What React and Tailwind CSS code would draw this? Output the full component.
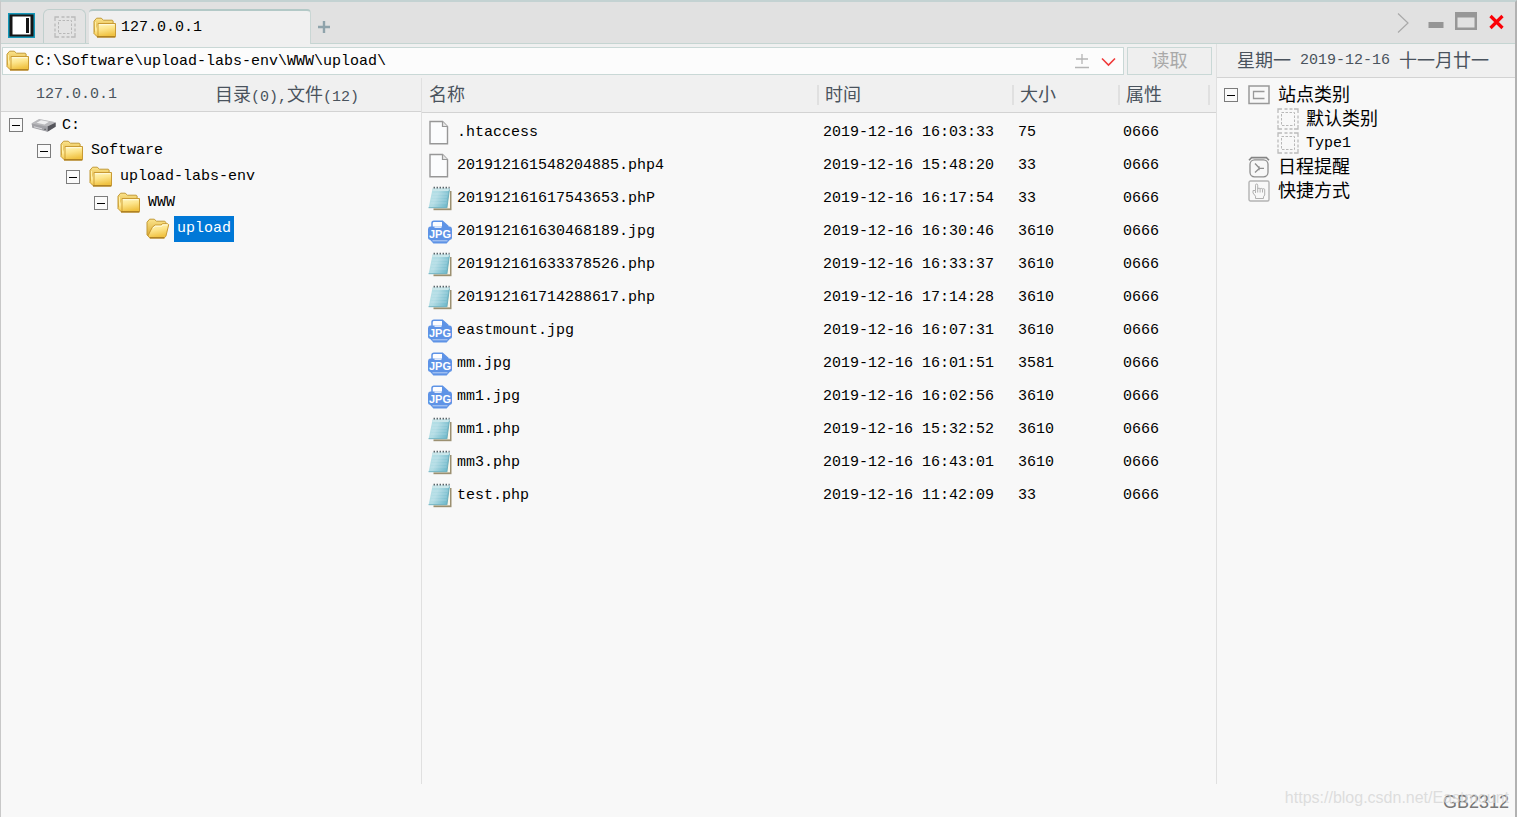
import React from "react";

const files = [
  { name: ".htaccess", kind: "file", time: "2019-12-16 16:03:33", size: "75", attr: "0666" },
  { name: "201912161548204885.php4", kind: "file", time: "2019-12-16 15:48:20", size: "33", attr: "0666" },
  { name: "201912161617543653.phP", kind: "note", time: "2019-12-16 16:17:54", size: "33", attr: "0666" },
  { name: "201912161630468189.jpg", kind: "jpg", time: "2019-12-16 16:30:46", size: "3610", attr: "0666" },
  { name: "201912161633378526.php", kind: "note", time: "2019-12-16 16:33:37", size: "3610", attr: "0666" },
  { name: "201912161714288617.php", kind: "note", time: "2019-12-16 17:14:28", size: "3610", attr: "0666" },
  { name: "eastmount.jpg", kind: "jpg", time: "2019-12-16 16:07:31", size: "3610", attr: "0666" },
  { name: "mm.jpg", kind: "jpg", time: "2019-12-16 16:01:51", size: "3581", attr: "0666" },
  { name: "mm1.jpg", kind: "jpg", time: "2019-12-16 16:02:56", size: "3610", attr: "0666" },
  { name: "mm1.php", kind: "note", time: "2019-12-16 15:32:52", size: "3610", attr: "0666" },
  { name: "mm3.php", kind: "note", time: "2019-12-16 16:43:01", size: "3610", attr: "0666" },
  { name: "test.php", kind: "note", time: "2019-12-16 11:42:09", size: "33", attr: "0666" },
];

const Gradients = () => (
  <svg className="absolute h-0 w-0" aria-hidden="true">
    <defs>
      <linearGradient id="folderFront" x1="0" y1="0" x2="0.3" y2="1">
        <stop offset="0" stopColor="#fff8c4" />
        <stop offset="0.5" stopColor="#fde58c" />
        <stop offset="1" stopColor="#f0c242" />
      </linearGradient>
      <linearGradient id="folderBack" x1="0" y1="0" x2="0" y2="1">
        <stop offset="0" stopColor="#fbe48c" />
        <stop offset="1" stopColor="#d9a52a" />
      </linearGradient>
      <linearGradient id="noteCover" x1="0" y1="0.2" x2="1" y2="0.6">
        <stop offset="0" stopColor="#b4e0e6" />
        <stop offset="0.4" stopColor="#b2dce4" />
        <stop offset="1" stopColor="#6fb8ca" />
      </linearGradient>
      <linearGradient id="driveSide" x1="0" y1="0" x2="0" y2="1">
        <stop offset="0" stopColor="#e2e2e4" />
        <stop offset="1" stopColor="#8e8e92" />
      </linearGradient>
    </defs>
  </svg>
);

const Folder = () => (
  <svg className="shrink-0" width="24" height="22" viewBox="0 0 24 22" aria-hidden="true">
    <path d="M1 17V4.2L3.6 1.2h4.6l2.3 2h8.8l.8.8v2.5" fill="url(#folderBack)" stroke="#c39a36" strokeLinejoin="round" />
    <path d="M2.5 5v13" stroke="#fff0a8" strokeWidth="1" />
    <path d="M5 6.5h17.5v12.6a.8.8 0 0 1-.8.8H4.5L1.2 16.8" fill="url(#folderFront)" stroke="#c99a33" strokeLinejoin="round" />
    <path d="M5 6.5V19" stroke="#cf9f35" />
    <path d="M6 7.7h15.4" stroke="#fffbe0" />
    <path d="M4 19.8h18.4" stroke="#b08222" strokeWidth="1.6" />
  </svg>
);

const FolderOpen = () => (
  <svg className="shrink-0" width="24" height="22" viewBox="0 0 24 22" aria-hidden="true">
    <path d="M1 17V4.2L3.6 1.2h4.6l2.3 2h8.3l1 1V8l-3 11H4z" fill="url(#folderBack)" stroke="#c39a36" strokeLinejoin="round" />
    <path d="M6.2 9.4 9 7h6l1.5-1.3h5.2l1 1-2.8 11.6-1.6 1.5H3.8L1.9 18z" fill="url(#folderFront)" stroke="#c99a33" strokeLinejoin="round" />
    <path d="M7 10 9.4 8.2h6.2L17 6.9h4.4" stroke="#fffbe0" fill="none" />
    <path d="M3.8 19.8h14.6" stroke="#b08222" strokeWidth="1.6" />
  </svg>
);

const Drive = () => (
  <svg className="shrink-0" width="26" height="16" viewBox="0 0 26 16" aria-hidden="true">
    <path d="M.5 6.5 8 2l16.5 3.2v4L16.5 14.5 1.5 10z" fill="url(#driveSide)" />
    <path d="M.8 6.2 8.2 2 24.5 5.2 16.6 9.6z" fill="#b9b9bc" />
    <path d="M5.5 5.8 10 3.2l8 1.6-4.4 2.6z" fill="#efeff0" />
    <path d="M16.5 9.6 24.7 5.4v4.4L16.5 14.8z" fill="#55555b" />
    <path d="M.8 6.5l15.7 3.3v5L1.2 10.8z" fill="#a2a2a7" />
    <path d="M3 9.8l8 2" stroke="#d7d7da" />
    <path d="M13.3 12.3h1.6" stroke="#55595c" />
  </svg>
);

const BlankFile = () => (
  <svg className="shrink-0" width="24" height="26" viewBox="0 0 24 26" aria-hidden="true">
    <path d="M2 1.5h12.5l5 5v17.3H2z" fill="#fbfcfd" stroke="#979797" strokeWidth="1.4" />
    <path d="M14.5 1.5v5h5" fill="#e6e6e6" stroke="#979797" strokeWidth="1.2" />
  </svg>
);

const Notepad = () => (
  <svg className="shrink-0" width="24" height="26" viewBox="0 0 24 26" aria-hidden="true">
    <path d="M5.5 5h18v19.2h-18z" fill="#9c9071" />
    <path d="M5 4h17v18.4H5z" fill="#fbf7e9" />
    <path d="M4.6 2.4h17L18.9 22H.6z" fill="url(#noteCover)" />
    <path d="M4.6 2.4h17L21.2 5H4.2z" fill="#c9e6ea" />
    <path d="M4.2 8h15.5M3.6 11h15.5M3.2 14h15.6M2.6 17h16" stroke="#eaf7f9" strokeOpacity="0.3" strokeWidth="0.8" />
    <path d="M21.4 3.5 18.9 22" stroke="#68a9b9" strokeWidth="0.9" />
    <path d="M5.6 1.7h16" stroke="#47555b" strokeWidth="1.8" strokeDasharray="1.3 1.7" />
    <path d="M.6 21.7h18.3" stroke="#74b4c2" />
  </svg>
);

const JpgFile = () => (
  <svg className="shrink-0" width="24" height="26" viewBox="0 0 24 26" aria-hidden="true">
    <path d="M4 9V4.2q0-2 2-2h8.4l5.4 5V9" fill="#fdfdff" stroke="#5e93e6" strokeWidth="1.5" />
    <path d="M14 1.8 20.4 8H14z" fill="#5e93e6" />
    <path d="M2.5 7.6h19q2.2 0 2.5 2.4v9q0 1.6-2.2 1.9L18.6 24.5H5.4L2.2 20.9Q0 20.600 0 19v-9q.3-2.400 2.500-2.400z" fill="#5e93e6" />
    <path d="M4.500 21.800h15" stroke="#b9d0f6" strokeWidth="1" />
    <path d="M6.500 7.600h7v1.200h-7z" fill="#fdfdff" />
    <text x="12" y="19" textAnchor="middle" fontSize="11" fontWeight="700" fontFamily="Liberation Sans, sans-serif" fill="#ffffff">JPG</text>
  </svg>
);

const Dotted = () => (
  <svg className="shrink-0" width="22" height="22" viewBox="0 0 22 22" fill="none" aria-hidden="true">
    <path d="M1 5V1h4M17 1h4v4M21 17v4h-4M5 21H1v-4M7.5 1h3M12.5 1h3M7.5 21h3M12.5 21h3M1 7.5v3M1 12.5v3M21 7.5v3M21 12.5v3" stroke="#bbbbbb" strokeWidth="1.3" />
    <rect x="4.5" y="4.5" width="13" height="13" stroke="#b8b8b8" strokeDasharray="2.5 1.5" />
  </svg>
);

const SiteIcon = () => (
  <svg className="shrink-0" width="22" height="20" viewBox="0 0 22 20" fill="none" aria-hidden="true">
    <rect x="1" y="1" width="20" height="17.5" stroke="#999999" strokeWidth="1.5" />
    <path d="M16.5 6.5h-11v7h11" stroke="#999999" strokeWidth="1.3" />
  </svg>
);

const ClockIcon = () => (
  <svg className="shrink-0" width="22" height="22" viewBox="0 0 22 22" fill="none" aria-hidden="true">
    <path d="M1 4.200 3.600 1.600h14.800L21 4.200" stroke="#858585" strokeWidth="1.600" />
    <rect x="2" y="3.800" width="18" height="17" rx="4.500" stroke="#8f8f8f" strokeWidth="1.300" />
    <path d="m7 7.500 4.500 4.800L7 16.500M11 12.300h5M11 10.300v4" stroke="#8f8f8f" strokeWidth="1.300" />
  </svg>
);

const HandIcon = () => (
  <svg className="shrink-0" width="22" height="22" viewBox="0 0 22 22" fill="none" aria-hidden="true">
    <rect x="1" y="1" width="20" height="20" rx="1.500" stroke="#b3b3b3" strokeWidth="1.400" />
    <path d="M7.500 18.500v-2.300L5 13v-2.500h2.500V5.200q0-1.200 1.100-1.200t1.100 1.200V9q0-.8 1.200-.8T12.100 9q0-.6 1.200-.6t1.200.8q0-.5 1.100-.5t1.100 1V15l-1.200 1.800v1.700zM9.700 9v3.500M12.100 9v3.500M14.500 9.200v3.300M7.500 10.500V13" stroke="#b0b0b0" />
  </svg>
);

const Toggle = ({ label }) => (
  <button type="button" aria-label={label} className="flex h-[14px] w-[14px] shrink-0 items-center justify-center border border-[#7c7c7c] bg-[#fafafa]">
    <span className="h-px w-2 bg-black" />
  </button>
);

const kinds = { file: BlankFile, note: Notepad, jpg: JpgFile };

const tree = [
  { name: "Software", pad: "pl-[36px]" },
  { name: "upload-labs-env", pad: "pl-[65px]" },
  { name: "WWW", pad: "pl-[93px]" },
];

const Heading = ({ children }) => (
  <th scope="col" className="p-0 text-left font-normal">
    <div className="flex h-5 items-center border-l-2 border-[#e0e0e0] pt-0.5 pl-[6px] text-lg leading-5">{children}</div>
  </th>
);

export default function App() {
  return (
    <div className="relative flex min-h-screen flex-col border-t-2 border-r-2 border-l border-t-[#c3d2d2] border-r-[#b2b2b2] border-l-[#c8c8c8] bg-[#f8f8f8] font-['Liberation_Mono','Noto_Sans_CJK_SC',monospace] text-[15px] text-black">
      <Gradients />
      <header className="flex h-[42px] items-end border-b border-[#c5d5d2] bg-[#e1e1e1]">
        <button type="button" aria-label="侧栏" className="mb-[5px] ml-[7px] shrink-0">
          <svg width="28" height="25" viewBox="0 0 28 25" aria-hidden="true">
            <rect x="0" y="0" width="27" height="25" fill="#1597b8" />
            <rect x="1.500" y="1.500" width="24" height="22" fill="#161616" />
            <rect x="4.500" y="3.500" width="18" height="18" fill="#ffffff" />
            <rect x="18" y="5" width="3" height="15" fill="#161616" />
          </svg>
        </button>
        <button type="button" aria-label="首页" className="ml-[7px] flex h-[34px] w-[43px] shrink-0 items-center justify-center rounded-t-md border border-b-0 border-[#c0cfcd] bg-[#e3e3e3]">
          <Dotted />
        </button>
        <button type="button" className="-mb-px ml-[3px] flex h-[35px] w-[222px] shrink-0 items-center gap-1 rounded-t-sm border-t-2 border-r border-t-[#b3c9c7] border-r-[#c9d6d4] bg-[#f0f0f0] pl-1">
          <Folder />
          <span className="pt-0.5">127.0.0.1</span>
        </button>
        <button type="button" aria-label="新建标签" className="mb-[9px] ml-[6px]">
          <svg width="14" height="14" viewBox="0 0 14 14" aria-hidden="true">
            <path d="M7 1v12M1 7h12" stroke="#8fa3ab" strokeWidth="2.400" />
          </svg>
        </button>
        <div className="mb-2 ml-auto flex h-6 items-center">
          <button type="button" aria-label="更多">
            <svg width="14" height="22" viewBox="0 0 14 22" fill="none" aria-hidden="true">
              <path d="m1 1.500 10 9.500L1 20.500" stroke="#a9a9a9" strokeWidth="1.200" />
            </svg>
          </button>
          <button type="button" aria-label="最小化" className="ml-4">
            <svg width="18" height="18" viewBox="0 0 18 18" aria-hidden="true">
              <rect x="1.500" y="8" width="15" height="6" fill="#959595" />
            </svg>
          </button>
          <button type="button" aria-label="最大化" className="mb-1 ml-[10px]">
            <svg width="22" height="18" viewBox="0 0 22 18" aria-hidden="true">
              <path d="M0 0h22v18H0zM2.500 5.500v10h17v-10z" fill="#979797" fillRule="evenodd" />
            </svg>
          </button>
          <button type="button" aria-label="关闭" className="mr-[11px] ml-3 pb-0.5">
            <svg width="15" height="16" viewBox="0 0 15 16" aria-hidden="true">
              <path d="m1.500 2 12 12m0-12-12 12" stroke="#fb0007" strokeWidth="3.200" />
            </svg>
          </button>
        </div>
      </header>

      <div className="flex flex-1">
        <div className="flex min-w-0 flex-1 flex-col">
          <div className="flex h-[34px] items-center gap-[3px] bg-[#f0f0f0] pr-1 pl-px">
            <div className="flex h-7 flex-1 items-center border border-[#c9d8d6] bg-[#fcfcfc] pl-[3px]">
              <Folder />
              <input aria-label="路径" defaultValue="C:\Software\upload-labs-env\WWW\upload\" className="ml-[5px] min-w-0 flex-1 bg-transparent pt-0.5 outline-none" />
              <button type="button" aria-label="展开选项" className="mr-3">
                <svg width="14" height="16" viewBox="0 0 14 16" aria-hidden="true">
                  <path d="M7 1v10M1 6h12M0 14.500h14" stroke="#b5b5b5" strokeWidth="1.300" />
                </svg>
              </button>
              <button type="button" aria-label="历史路径" className="mr-[7px] pt-0.5">
                <svg width="15" height="10" viewBox="0 0 15 10" fill="none" aria-hidden="true">
                  <path d="m1 1.500 6.500 6.500L14 1.500" stroke="#f03a3a" strokeWidth="1.600" />
                </svg>
              </button>
            </div>
            <button type="button" className="h-7 w-[85px] border border-[#c9d8d6] bg-[#efefef] pt-0.5 text-lg leading-6 text-[#a9a9a9]">读取</button>
          </div>

          <div className="flex flex-1">
            <nav aria-label="目录树" className="w-[420px] shrink-0">
              <div className="flex h-[34px] items-center border-b border-[#d3d3d3] bg-[#f0f0f0] pt-0.5 pl-[35px] text-[#4a535d]">
                <span className="w-[179px]">127.0.0.1</span>
                <span>
                  <span className="text-lg">目录</span>(0),<span className="text-lg">文件</span>(12)
                </span>
              </div>
              <ul className="mb-[33px]">
                <li className="flex h-[26px] items-center pl-2">
                  <Toggle label="折叠 C:" />
                  <span className="ml-2 flex"><Drive /></span>
                  <span className="ml-[5px] pt-0.5">C:</span>
                </li>
                {tree.map((node) => (
                  <li key={node.name} className={"flex h-[26px] items-center " + node.pad}>
                    <Toggle label={"折叠 " + node.name} />
                    <span className="ml-[9px] flex"><Folder /></span>
                    <span className="ml-[7px]">{node.name}</span>
                  </li>
                ))}
                <li className="flex h-[26px] items-center pl-[145px]">
                  <FolderOpen />
                  <span className="ml-1 flex h-[26px] items-center bg-[#0078d7] px-[3px] text-white">upload</span>
                </li>
              </ul>
            </nav>

            <main className="mb-[33px] min-w-0 flex-1 border-l border-[#e0e0e0]">
              <table className="w-full table-fixed border-collapse">
                <colgroup>
                  <col />
                  <col className="w-[195px]" />
                  <col className="w-[106px]" />
                  <col className="w-[90px]" />
                  <col className="w-[8px]" />
                </colgroup>
                <thead>
                  <tr className="h-[34px] border-b border-[#d3d3d3] bg-[#f0f0f0] text-[#4a535d]">
                    <th scope="col" className="p-0 pt-0.5 pl-[7px] text-left text-lg leading-5 font-normal">名称</th>
                    <Heading>时间</Heading>
                    <Heading>大小</Heading>
                    <Heading>属性</Heading>
                    <td className="p-0"><div className="h-5 border-l-2 border-[#e0e0e0]" /></td>
                  </tr>
                </thead>
                <tbody>
                  <tr className="h-1" aria-hidden="true"><td colSpan={5} className="p-0" /></tr>
                  {files.map((f) => {
                    const Icon = kinds[f.kind];
                    return (
                      <tr key={f.name} className="h-[33px]">
                        <td className="p-0">
                          <span className="flex items-center gap-[5px] pl-[6px]">
                            <Icon />
                            <span className="pt-0.5">{f.name}</span>
                          </span>
                        </td>
                        <td className="p-0 pt-0.5 pl-[6px]">{f.time}</td>
                        <td className="p-0 pt-0.5 pl-[6px]">{f.size}</td>
                        <td className="p-0 pt-0.5 pl-[5px]">{f.attr}</td>
                        <td className="p-0" />
                      </tr>
                    );
                  })}
                </tbody>
              </table>
            </main>
          </div>
        </div>

        <aside className="mb-[33px] w-[299px] shrink-0 border-l border-[#e0e0e0]">
          <div className="flex h-[34px] items-center gap-[9px] border-b border-[#d3d3d3] bg-[#f0f0f0] pt-0.5 pl-5 text-[#4a535d]">
            <span className="text-lg">星期一</span>
            <span>2019-12-16</span>
            <span className="text-lg">十一月廿一</span>
          </div>
          <ul className="pt-[5px] text-lg">
            <li className="flex h-6 items-center pl-[7px]">
              <Toggle label="折叠站点类别" />
              <span className="mr-2 ml-[10px] flex"><SiteIcon /></span>
              <span className="pt-0.5">站点类别</span>
            </li>
            <li className="flex h-6 items-center gap-[7px] pl-[60px]"><Dotted /><span className="pt-0.5">默认类别</span></li>
            <li className="flex h-6 items-center gap-[7px] pl-[60px]"><Dotted /><span className="pt-0.5 text-[15px]">Type1</span></li>
            <li className="flex h-6 items-center gap-2 pl-[31px]"><ClockIcon /><span className="pt-0.5">日程提醒</span></li>
            <li className="flex h-6 items-center gap-2 pl-[31px]"><HandIcon /><span className="pt-0.5">快捷方式</span></li>
          </ul>
        </aside>
      </div>

      <footer className="absolute right-[6px] bottom-[3px] flex items-center justify-end font-['Liberation_Sans',sans-serif]">
        <span className="text-lg leading-6 text-[#777777]">GB2312</span>
        <span className="absolute right-0 bottom-1 text-base leading-6 whitespace-nowrap text-[#d6d6d6]/80">https://blog.csdn.net/Eastmount</span>
      </footer>
    </div>
  );
}
